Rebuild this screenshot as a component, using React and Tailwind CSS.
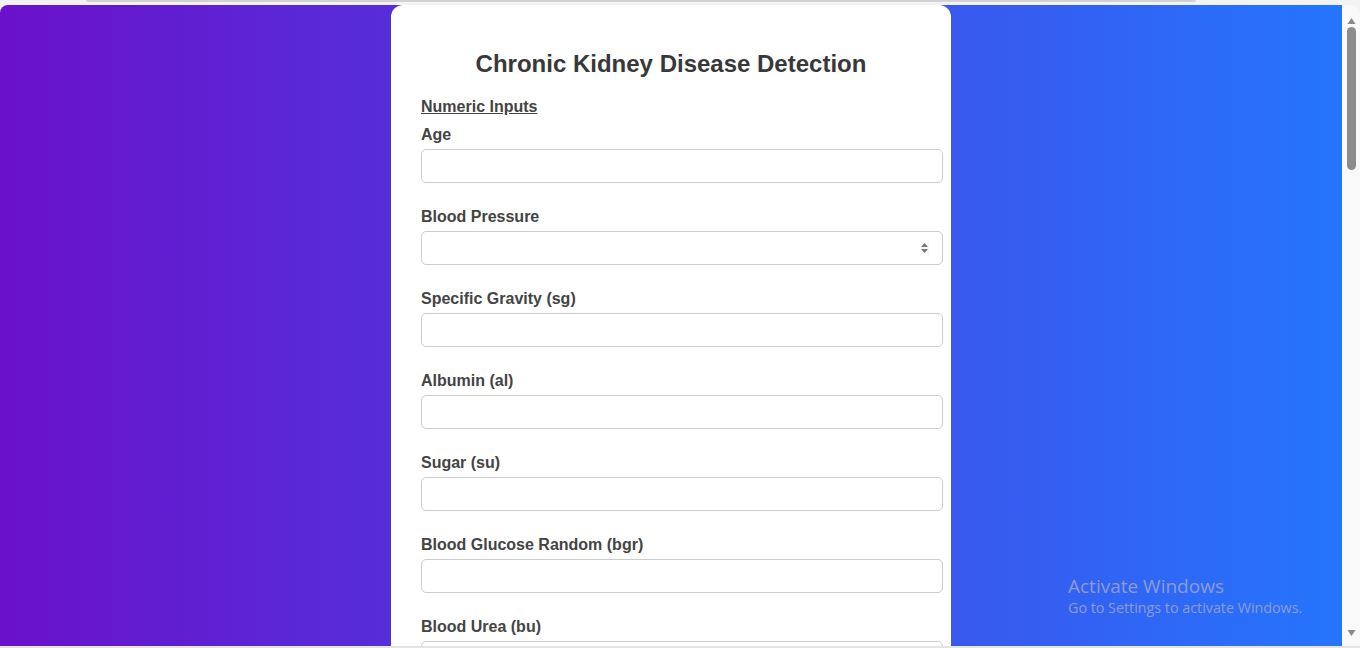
import React from 'react';

const fields = [
  { label: 'Age' },
  { label: 'Blood Pressure', spinner: true },
  { label: 'Specific Gravity (sg)' },
  { label: 'Albumin (al)' },
  { label: 'Sugar (su)' },
  { label: 'Blood Glucose Random (bgr)' },
  { label: 'Blood Urea (bu)' },
];

const Spinner = () => (
  <svg width="9" height="16" viewBox="0 0 9 16" className="absolute right-[14px] top-[9px]">
    <rect x="0" y="0" width="9" height="16" fill="#f7f7f7" />
    <path d="M4.5 3 L8 7 L1 7 Z" fill="#777" />
    <path d="M4.5 13 L8 9 L1 9 Z" fill="#777" />
  </svg>
);

const Field = ({ label, spinner }) => (
  <div className="mb-[25px]">
    <label className="block text-[16px] leading-[18px] font-bold text-[#444] mb-[5px]">{label}</label>
    <div className="relative w-[522px]">
      <div className="h-[34px] w-full rounded-[5px] border border-[#cccccc] bg-white" />
      {spinner && <Spinner />}
    </div>
  </div>
);

const Scrollbar = () => (
  <div className="w-[18px] bg-[#f9f9f9] rounded-tr-[8px] flex flex-col items-center">
    <svg width="9" height="8" viewBox="0 0 9 8" className="mt-[12px]">
      <path d="M4.5 1 L8.5 7 L0.5 7 Z" fill="#8a8a8a" />
    </svg>
    <div className="mt-[2px] w-[9px] h-[143px] rounded-full bg-[#8c8c8c]" />
    <div className="flex-1" />
    <svg width="9" height="8" viewBox="0 0 9 8" className="mb-[9px]">
      <path d="M4.5 7 L8.5 1 L0.5 1 Z" fill="#8a8a8a" />
    </svg>
  </div>
);

export default function App() {
  return (
    <div className="h-[648px] w-[1360px] bg-[#f3f3f3] flex flex-col overflow-hidden" style={{ fontFamily: '"Liberation Sans", Arial, sans-serif' }}>
      <div className="h-[5px] flex">
        <div className="ml-[86px] w-[1110px] h-[2px] bg-[#d2d2d2] rounded-b-sm" />
      </div>
      <div className="flex-1 flex min-h-0">
        <div className="relative flex-1 min-w-0 overflow-hidden rounded-tl-[8px] bg-linear-to-r/srgb from-[#6a11cb] to-[#2575fc]">
          <div className="mx-auto w-[560px] bg-white rounded-t-[12px] px-[30px] pt-[45px] pb-[30px]">
            <h2 className="text-center text-[24px] leading-[28px] font-bold text-[#383838]">Chronic Kidney Disease Detection</h2>
            <div className="mt-[20px] text-[16px] leading-[18px] font-bold text-[#444] underline">Numeric Inputs</div>
            <div className="mt-[10px]">
              {fields.map((f) => (
                <Field key={f.label} {...f} />
              ))}
            </div>
          </div>
          <div className="absolute left-[1068px] top-[569px] text-[#8d9bd3]" style={{ fontFamily: '"Open Sans", "Noto Sans", sans-serif' }}>
            <div className="text-[19px] leading-[24px] font-normal">Activate Windows</div>
            <div className="text-[14.3px] leading-[20px]">Go to Settings to activate Windows.</div>
          </div>
        </div>
        <Scrollbar />
      </div>
      <div className="h-[2px] bg-[#e4e4e4]" />
    </div>
  );
}
